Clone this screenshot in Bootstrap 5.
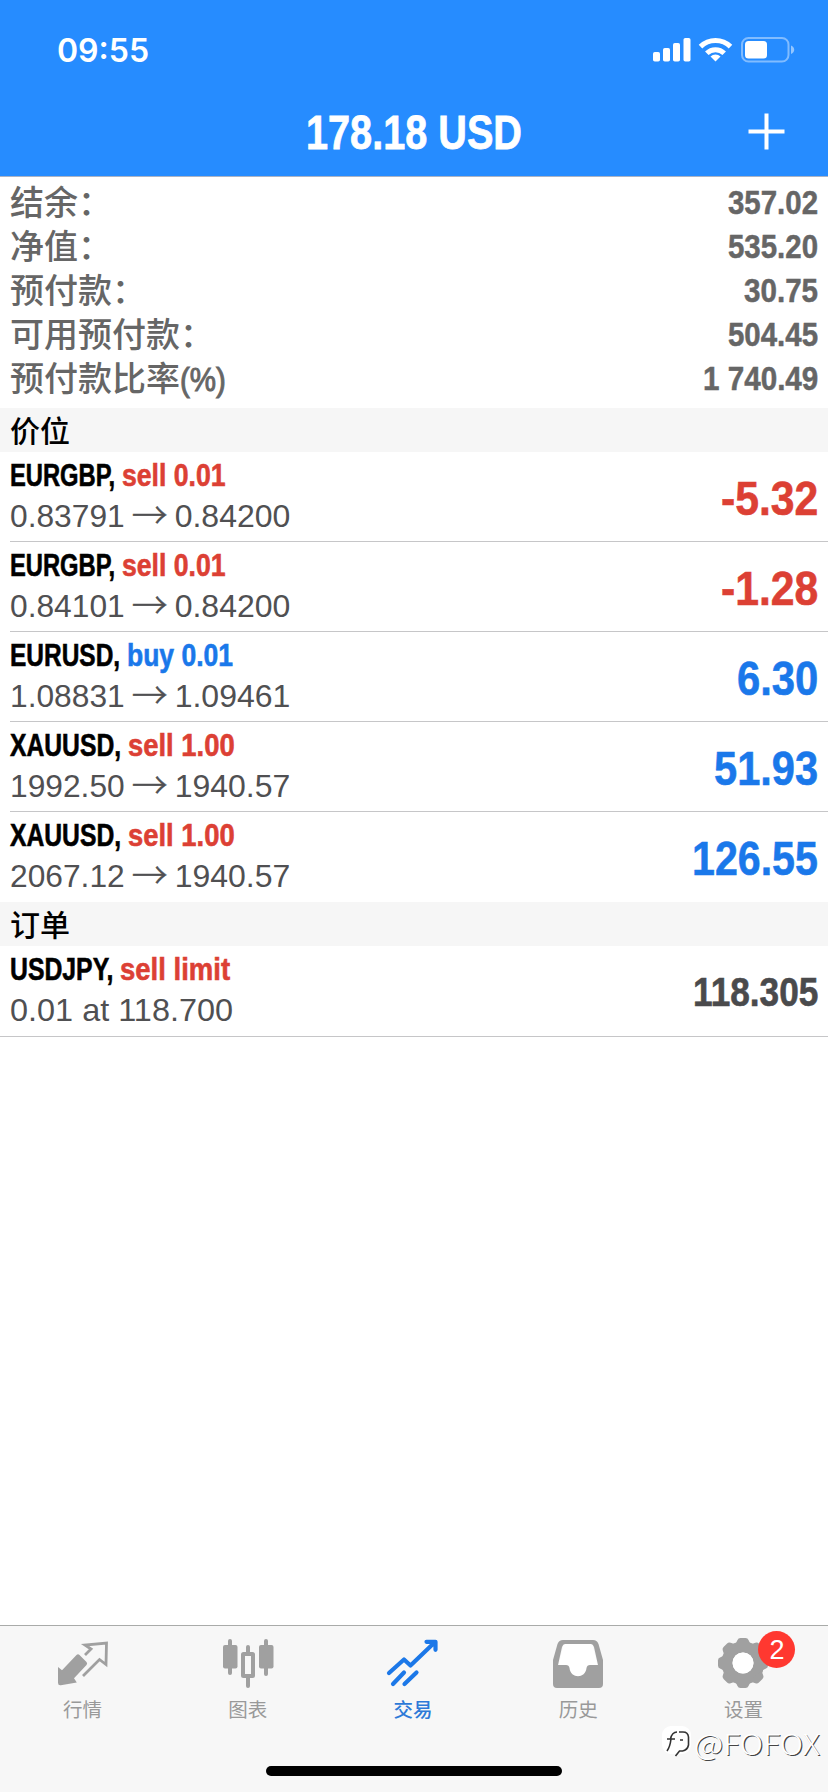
<!DOCTYPE html>
<html lang="zh-CN">
<head>
<meta charset="utf-8">
<meta name="viewport" content="width=device-width, initial-scale=1">
<title>交易</title>
<link href="https://cdn.jsdelivr.net/npm/bootstrap@5.3.0/dist/css/bootstrap.min.css" rel="stylesheet">
<style>
:root{--ui-blue:#268cff;--gain:#1a78ea;--loss:#dc4034}
body{font-family:"Liberation Sans","Noto Sans CJK SC",sans-serif;background:#fff;color:#000;overflow:hidden}
.screen{width:828px;height:1792px}
.topbar{height:177px;background:var(--ui-blue);border-bottom:1px solid #a9b3c6}
.statusbar{height:88px;padding:12px 33px 0 57px}
.clock{font:600 32px/1 Inter,sans-serif;padding-top:1px}
.titlebar{height:88px}
.headline{font-size:49px;line-height:56px;font-weight:700;-webkit-text-stroke:.8px}
.fit{display:inline-block;transform-origin:0 50%;white-space:pre}
.add-btn{right:42px;top:25px;line-height:0}
.totals{padding:3px 10px 8px 10px;height:231px;color:#666}
.total-row{height:44px}
.total-name{font:500 34px/42px "Noto Sans CJK SC",sans-serif}
.total-num{font-size:34px;line-height:44px;font-weight:700;-webkit-text-stroke:.5px}
.paren{font-family:"Liberation Sans",sans-serif;font-weight:400;line-height:38px;-webkit-text-stroke:1px}
.section-name{height:44px;background:#f6f6f6;padding-left:10px;font:500 30px/42px "Noto Sans CJK SC",sans-serif}
.deal{height:90px;margin-left:10px;padding:5px 10px 0 0;border-bottom:1px solid #c6c6c8}
.deal.last-deal{border-color:transparent}
.deal.full-line{margin-left:0;padding-left:10px;height:91px}
.deal-name{font-size:32px;line-height:36px;height:36px;font-weight:700;-webkit-text-stroke:.6px}
.deal-price{font-size:32px;line-height:36px;height:42px;padding-top:5px;color:#505052}
.arrow-cell{width:50px;text-align:center;font:300 36px/30px "Noto Sans CJK SC",sans-serif;-webkit-text-stroke:.5px}
.result{font-size:48px;font-weight:700;line-height:84px;-webkit-text-stroke:.6px}
.result.quote{font-size:40px;line-height:82px;color:#4a4a4c}
.sell{color:var(--loss)}.buy{color:var(--gain)}
.tabbar{height:167px;background:#f7f7f7;border-top:1px solid #a9aba9;color:#9a9a9a;padding-right:2px}
.tab{color:#999;font:400 19.5px/24px "Noto Sans CJK SC",sans-serif;padding-top:10px}
.tab.active{color:#2d7ad8;font-weight:500}
.tab svg{display:block;margin-bottom:5px}
.count{left:43px;top:-5px;width:37px;height:37px;background:#ff3830;color:#fff;font:400 27px/38px "Liberation Sans",sans-serif}
.home-pill{left:266px;bottom:16px;width:296px;height:10px;background:#000}
.stamp{right:8px;bottom:33px;color:#fff;font:300 29px/34px "Noto Sans CJK SC",sans-serif;text-shadow:1px 1px 0 #444}
</style>
<script src="https://cdn.jsdelivr.net/npm/bootstrap@5.3.0/dist/js/bootstrap.bundle.min.js"></script>
</head>
<body>
<div class="screen d-flex flex-column position-relative">
  <header class="topbar text-white flex-shrink-0">
    <div class="statusbar d-flex justify-content-between align-items-center">
      <span class="clock"><span class="fit" data-w="92">09:55</span></span>
      <svg width="144" height="28" viewBox="651 36 144 28" fill="#fff">
        <rect x="653" y="52" width="7" height="9.5" rx="1.8"/><rect x="663" y="48" width="7" height="13.5" rx="1.8"/><rect x="673" y="43" width="7" height="18.5" rx="1.8"/><rect x="683.5" y="38" width="7" height="23.5" rx="1.8"/>
        <g fill="none" stroke="#fff" stroke-width="5"><path d="M700.5 46.6a21.5 21.5 0 0 1 30 0"/><path d="M706.8 53.2a12.4 12.4 0 0 1 17.4 0"/></g>
        <path d="M715.500 61.500l-5-5a7.200 7.200 0 0 1 10 0z"/>
        <rect x="742" y="38" width="46.500" height="23.500" rx="6.500" fill="none" stroke="#fff" stroke-opacity=".42" stroke-width="2"/>
        <rect x="745" y="41" width="22" height="17.500" rx="3.500"/><path d="M791 45.500q3.200 1.500 3.200 4.300t-3.200 4.300z" fill-opacity=".5"/>
      </svg>
    </div>
    <div class="titlebar position-relative d-flex justify-content-center align-items-center">
      <span class="headline"><span class="fit" data-w="216">178.18 USD</span></span>
      <span class="add-btn position-absolute"><svg width="40" height="40" viewBox="0 0 40 40" stroke="#fff" stroke-width="4"><path d="M20.500 .500v36M2.500 18.500h36"/></svg></span>
    </div>
  </header>

  <section class="totals flex-shrink-0">
    <div class="total-row d-flex justify-content-between"><span class="total-name">结余：</span><span class="total-num"><span class="fit" data-w="90">357.02</span></span></div>
    <div class="total-row d-flex justify-content-between"><span class="total-name">净值：</span><span class="total-num"><span class="fit" data-w="90">535.20</span></span></div>
    <div class="total-row d-flex justify-content-between"><span class="total-name">预付款：</span><span class="total-num"><span class="fit" data-w="74">30.75</span></span></div>
    <div class="total-row d-flex justify-content-between"><span class="total-name">可用预付款：</span><span class="total-num"><span class="fit" data-w="90">504.45</span></span></div>
    <div class="total-row d-flex justify-content-between"><span class="total-name">预付款比率<span class="paren fit" data-w="46">(%)</span></span><span class="total-num"><span class="fit" data-w="115">1 740.49</span></span></div>
  </section>

  <h2 class="section-name m-0 flex-shrink-0">价位</h2>
  <div class="deal d-flex justify-content-between">
    <div><div class="deal-name d-flex"><span class="fit" data-w="112">EURGBP, </span><span class="fit sell" data-w="104">sell 0.01</span></div>
    <div class="deal-price d-flex"><span class="fit" data-w="115">0.83791</span><span class="arrow-cell">→</span><span class="fit" data-w="116">0.84200</span></div></div>
    <div class="result sell"><span class="fit" data-w="97">-5.32</span></div>
  </div>
  <div class="deal d-flex justify-content-between">
    <div><div class="deal-name d-flex"><span class="fit" data-w="112">EURGBP, </span><span class="fit sell" data-w="104">sell 0.01</span></div>
    <div class="deal-price d-flex"><span class="fit" data-w="115">0.84101</span><span class="arrow-cell">→</span><span class="fit" data-w="116">0.84200</span></div></div>
    <div class="result sell"><span class="fit" data-w="97">-1.28</span></div>
  </div>
  <div class="deal d-flex justify-content-between">
    <div><div class="deal-name d-flex"><span class="fit" data-w="117">EURUSD, </span><span class="fit buy" data-w="106">buy 0.01</span></div>
    <div class="deal-price d-flex"><span class="fit" data-w="115">1.08831</span><span class="arrow-cell">→</span><span class="fit" data-w="116">1.09461</span></div></div>
    <div class="result buy"><span class="fit" data-w="81">6.30</span></div>
  </div>
  <div class="deal d-flex justify-content-between">
    <div><div class="deal-name d-flex"><span class="fit" data-w="118">XAUUSD, </span><span class="fit sell" data-w="107">sell 1.00</span></div>
    <div class="deal-price d-flex"><span class="fit" data-w="115">1992.50</span><span class="arrow-cell">→</span><span class="fit" data-w="116">1940.57</span></div></div>
    <div class="result buy"><span class="fit" data-w="104">51.93</span></div>
  </div>
  <div class="deal last-deal d-flex justify-content-between">
    <div><div class="deal-name d-flex"><span class="fit" data-w="118">XAUUSD, </span><span class="fit sell" data-w="107">sell 1.00</span></div>
    <div class="deal-price d-flex"><span class="fit" data-w="115">2067.12</span><span class="arrow-cell">→</span><span class="fit" data-w="116">1940.57</span></div></div>
    <div class="result buy"><span class="fit" data-w="126">126.55</span></div>
  </div>

  <h2 class="section-name m-0 flex-shrink-0">订单</h2>
  <div class="deal full-line d-flex justify-content-between">
    <div><div class="deal-name d-flex"><span class="fit" data-w="110">USDJPY, </span><span class="fit sell" data-w="110">sell limit</span></div>
    <div class="deal-price d-flex"><span class="fit" data-w="223">0.01 at 118.700</span></div></div>
    <div class="result quote"><span class="fit" data-w="125">118.305</span></div>
  </div>

  <nav class="tabbar mt-auto row g-0 flex-shrink-0 align-items-start">
    <div class="tab col d-flex flex-column align-items-center"><svg width="56" height="56" viewBox="54 1636 56 56"><path d="M57 1667l4 3.200 14.500-15.200q1.500-1.300 3 0l7 7q1.300 1.500 0 3l-12.500 13.200 2.800 4.300-16 2.800q-2.800.4-2.800-2.600z" fill="#a0a0a0"/><path d="M84 1655l6-6-6-4 21.500-2-.5 21.500-6.500-5L82 1676" fill="none" stroke="#a0a0a0" stroke-width="2.800"/></svg>行情</div>
    <div class="tab col d-flex flex-column align-items-center"><svg width="56" height="56" viewBox="220 1636 56 56" fill="#a0a0a0"><rect x="223" y="1645" width="14.500" height="23.500" rx="2"/><rect x="228" y="1639" width="4" height="36" rx="2"/><rect x="259" y="1645" width="14.500" height="23.500" rx="2"/><rect x="264" y="1639" width="4" height="37" rx="2"/><rect x="246" y="1645" width="4" height="11" rx="2"/><rect x="246" y="1675" width="4" height="13" rx="2"/><rect x="243" y="1654" width="10" height="22" rx=".5" fill="none" stroke="#a0a0a0" stroke-width="4"/></svg>图表</div>
    <div class="tab active col d-flex flex-column align-items-center"><svg width="56" height="56" viewBox="386 1636 56 56" fill="none" stroke="#1c78e8" stroke-width="4.200" stroke-linecap="round" stroke-linejoin="round"><path d="M390 1673l15-13.500 6.500 6L435 1643M427.500 1641.800h9v8M405 1672.500l-11 11.500M417.500 1672.500l-12 11.500"/></svg>交易</div>
    <div class="tab col d-flex flex-column align-items-center"><svg width="56" height="56" viewBox="550 1636 56 56"><path fill="#fff" d="M564 1643h28l6 24h-8l-6 9h-11l-6-9h-9z"/><path fill="#a0a0a0" fill-rule="evenodd" d="M563 1640h30q4 0 5.500 4l4.500 16v24q0 4-4 4h-42q-4 0-4-4v-24l4.500-16q1.500-4 5.500-4zm2 4q-2 0-3 3l-4 18h8q3 0 3.500 3c1 11 16 11 17 0q.5-3 3.500-3h8l-4-18q-1-3-3-3z"/></svg>历史</div>
    <div class="tab col d-flex flex-column align-items-center"><span class="position-relative"><svg width="56" height="56" viewBox="-28 -27 56 56"><circle r="16" fill="none" stroke="#a0a0a0" stroke-width="11"/><g id="teeth" fill="#a0a0a0"></g><circle r="10.500" fill="#fff"/></svg><span class="count position-absolute rounded-circle text-center">2</span></span>设置</div>
  </nav>
  <div class="home-pill position-absolute rounded-pill"></div>
  <div class="stamp position-absolute d-flex align-items-center"><svg width="34" height="34" viewBox="0 0 34 34" fill="none"><rect x="2" y="1" width="29" height="28" rx="9" fill="#fff"/><path d="M17 7q-5 0-6.500 7M7 14h8M11 14q-1 8-4 12" stroke="#333" stroke-width="1.600"/><path d="M19 7h4q5 0 5.500 5v8q-1 5-6 6h-3l-4 5M20 15h3" stroke="#333" stroke-width="1.600"/></svg><span class="fit" data-w="126">@FOFOX</span></div>
</div>
<script>
// Condense each run of text to its set width
document.querySelectorAll('.fit').forEach(el=>{
  const w=+el.dataset.w,n=el.offsetWidth;
  el.style.transform=`scaleX(${w/n})`;
  el.style.marginRight=`${w-n}px`;
});
// Gear teeth
document.getElementById('teeth').innerHTML=Array.from({length:8},(_,i)=>`<path d="M-8-18L-5.500-23Q-4.800-25-2.500-25H2.500Q4.800-25 5.500-23L8-18z" transform="rotate(${i*45})"/>`).join('');
</script>
</body>
</html>
